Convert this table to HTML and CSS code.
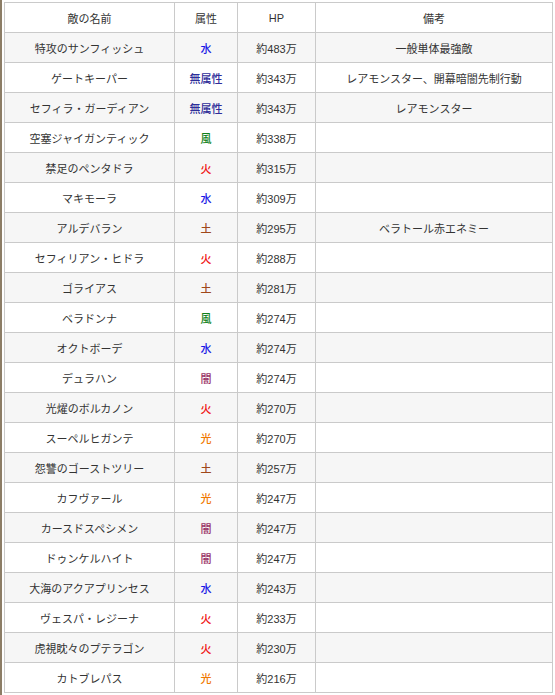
FILE: index.html
```html
<!DOCTYPE html>
<html lang="ja">
<head>
<meta charset="utf-8">
<link rel="stylesheet" href="styles.css">
</head>
<body>
<div class="page">
<table class="enemies">
<colgroup><col class="c1"><col class="c2"><col class="c3"><col class="c4"></colgroup>
<thead>
<tr><th>敵の名前</th><th>属性</th><th>HP</th><th>備考</th></tr>
</thead>
<tbody>
<tr><td>特攻のサンフィッシュ</td><td class="water">水</td><td>約483万</td><td>一般単体最強敵</td></tr>
<tr><td>ゲートキーパー</td><td class="none">無属性</td><td>約343万</td><td>レアモンスター、開幕暗闇先制行動</td></tr>
<tr><td>セフィラ・ガーディアン</td><td class="none">無属性</td><td>約343万</td><td>レアモンスター</td></tr>
<tr><td>空塞ジャイガンティック</td><td class="wind">風</td><td>約338万</td><td></td></tr>
<tr><td>禁足のペンタドラ</td><td class="fire">火</td><td>約315万</td><td></td></tr>
<tr><td>マキモーラ</td><td class="water">水</td><td>約309万</td><td></td></tr>
<tr><td>アルデバラン</td><td class="earth">土</td><td>約295万</td><td>ベラトール赤エネミー</td></tr>
<tr><td>セフィリアン・ヒドラ</td><td class="fire">火</td><td>約288万</td><td></td></tr>
<tr><td>ゴライアス</td><td class="earth">土</td><td>約281万</td><td></td></tr>
<tr><td>ベラドンナ</td><td class="wind">風</td><td>約274万</td><td></td></tr>
<tr><td>オクトボーデ</td><td class="water">水</td><td>約274万</td><td></td></tr>
<tr><td>デュラハン</td><td class="dark">闇</td><td>約274万</td><td></td></tr>
<tr><td>光燿のボルカノン</td><td class="fire">火</td><td>約270万</td><td></td></tr>
<tr><td>スーペルヒガンテ</td><td class="light">光</td><td>約270万</td><td></td></tr>
<tr><td>怨讐のゴーストツリー</td><td class="earth">土</td><td>約257万</td><td></td></tr>
<tr><td>カフヴァール</td><td class="light">光</td><td>約247万</td><td></td></tr>
<tr><td>カースドスペシメン</td><td class="dark">闇</td><td>約247万</td><td></td></tr>
<tr><td>ドゥンケルハイト</td><td class="dark">闇</td><td>約247万</td><td></td></tr>
<tr><td>大海のアクアプリンセス</td><td class="water">水</td><td>約243万</td><td></td></tr>
<tr><td>ヴェスパ・レジーナ</td><td class="fire">火</td><td>約233万</td><td></td></tr>
<tr><td>虎視眈々のプテラゴン</td><td class="fire">火</td><td>約230万</td><td></td></tr>
<tr><td>カトブレパス</td><td class="light">光</td><td>約216万</td><td></td></tr>
</tbody>
</table>
</div>
</body>
</html>
```

FILE: styles.css
```css
html, body {
  margin: 0;
  padding: 0;
  background: #fff;
}
.page {
  border-left: 2px solid #8c7d66;
  padding: 2px 0 0 2px;
  min-height: 695px;
  box-sizing: border-box;
}
.enemies {
  border-collapse: collapse;
  table-layout: fixed;
  width: 548px;
  font-family: "Liberation Sans", "Noto Sans CJK JP", sans-serif;
  font-size: 11px;
  color: #333;
}
.c1 { width: 170px; }
.c2 { width: 63px; }
.c3 { width: 78px; }
.c4 { width: 237px; }
.enemies th,
.enemies td {
  border: 1px solid #cacaca;
  height: 30px;
  padding: 0;
  text-align: center;
  vertical-align: middle;
  font-weight: normal;
  box-sizing: border-box;
}
.enemies th { background: #fff; }
.enemies tbody tr:nth-child(odd) td { background: #f6f6f6; }
.enemies tbody tr:nth-child(even) td { background: #fff; }
.enemies td:nth-child(2) { font-weight: 500; }
.water { color: #1a1ae6 !important; }
.none { color: #2e2e99 !important; }
.wind { color: #0f7f1a !important; }
.fire { color: #f01010 !important; }
.earth { color: #a0481a !important; }
.dark { color: #993366 !important; }
.light { color: #f07800 !important; }
```
